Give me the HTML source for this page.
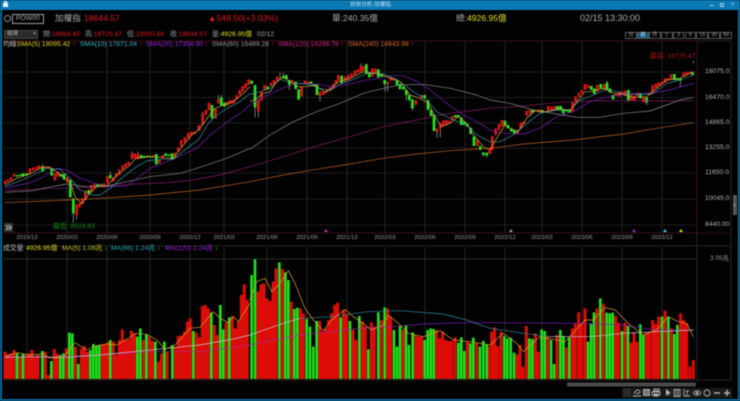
<!DOCTYPE html>
<html><head><meta charset="utf-8"><style>
html,body{margin:0;padding:0;background:#000}
#p{position:relative;width:740px;height:401px;overflow:hidden;background:#020203;font-family:"Liberation Sans","Noto Sans CJK TC",sans-serif;filter:blur(.4px)}
#p div{position:absolute;white-space:nowrap}
.t{line-height:10px;height:10px}
.a{font-size:8.6px;color:#bbb}
.c{font-size:6.8px}
.d{font-size:5.9px;color:#999;top:233px;transform:translateX(-50%)}
.y{font-size:6.8px;color:#b0b0b0;left:705px}
.r{color:#e0161c}
.ye{color:#e0e020}
.bt{top:32px;width:11.9px;height:7px;box-sizing:border-box;border:1px solid #555;font-size:5px;line-height:5px;text-align:center;color:#aaa}
svg{position:absolute;left:0;top:0}
</style></head><body><div id="p">
<div style="left:0;top:0;width:740px;height:10px;background:#0b79b4"></div>
<div style="left:0;top:10px;width:2px;height:391px;background:#0b6a9e"></div>
<div style="left:738px;top:10px;width:2px;height:391px;background:#0b6a9e"></div>
<div style="left:0;top:399px;width:740px;height:2px;background:#0b6a9e"></div>
<div class="t" style="left:350px;top:0;font-size:5.6px;color:#bfe0f0">技術分析-加權指</div>
<div style="left:3px;top:3px;width:5px;height:4px;background:#e8f4fa"></div>
<div style="left:4px;top:1px;width:3px;height:2px;border:1px solid #e8f4fa;border-bottom:0;box-sizing:border-box"></div>
<div style="left:710px;top:5px;width:4px;height:1px;background:#9cd0ea"></div>
<div style="left:720px;top:3px;width:4px;height:4px;border:1px solid #9cd0ea;box-sizing:border-box"></div>
<div style="left:731px;top:1px;font-size:6px;line-height:8px;color:#bfe0f0">×</div>

<div style="left:4px;top:15px;width:7px;height:7px;border:1px solid #888;border-radius:50%;box-sizing:border-box"></div>
<div class="t" style="left:12px;top:14px;width:32px;height:10px;border:1px solid #999;box-sizing:border-box;font-size:6.8px;line-height:8px;color:#aaa;padding-left:3px">POW00</div>
<div class="t a" style="left:55px;top:13px;color:#aaa">加權指</div>
<div class="t a r" style="left:84px;top:13px">18644.57</div>
<div class="t a r" style="left:208px;top:13px">▲548.50(+3.03%)</div>
<div class="t a" style="left:332px;top:13px;color:#aaa">單:240.35億</div>
<div class="t a" style="left:456px;top:13px;color:#aaa">總:<span class="ye">4926.95億</span></div>
<div class="t a" style="left:580px;top:13px;color:#aaa;font-size:9px">02/15 13:30:00</div>

<div class="t" style="left:4px;top:30px;width:34px;height:9px;background:#2b2b2b;border:1px solid #444;box-sizing:border-box;font-size:5.5px;line-height:7px;color:#aaa;padding-left:2px">選擇<span style="position:absolute;left:28px;color:#888">▾</span></div>
<div class="t c" style="left:43px;top:30px;color:#999">開:<span class="r">18664.45</span></div>
<div class="t c" style="left:85px;top:30px;color:#999">高:<span class="r">18725.47</span></div>
<div class="t c" style="left:127px;top:30px;color:#999">低:<span class="r">18550.86</span></div>
<div class="t c" style="left:170px;top:30px;color:#999">收:<span class="r">18644.57</span></div>
<div class="t c" style="left:212px;top:30px;color:#999">量:<span class="ye">4926.95億</span></div>
<div class="t c" style="left:257px;top:30px;color:#aaa">02/12</div>

<div class="bt" style="left:625px">日</div><div class="bt" style="left:636.9px;background:#0f5f8c;color:#cde">週</div><div class="bt" style="left:648.8px">月</div><div class="bt" style="left:660.7px">1</div><div class="bt" style="left:672.6px">3</div><div class="bt" style="left:684.5px">5</div><div class="bt" style="left:696.4px">15</div><div class="bt" style="left:708.3px">30</div><div class="bt" style="left:720.2px">60</div>

<svg width="740" height="401" viewBox="0 0 740 401">
<path d="M27 41V233M67 41V233M107 41V233M150 41V233M190 41V233M224 41V233M267 41V233M307 41V233M347 41V233M385 41V233M425 41V233M465 41V233M505 41V233M542 41V233M582 41V233M622 41V233M662 41V233M27 247V379M67 247V379M107 247V379M150 247V379M190 247V379M224 247V379M267 247V379M307 247V379M347 247V379M385 247V379M425 247V379M465 247V379M505 247V379M542 247V379M582 247V379M622 247V379M662 247V379" stroke="#2b2b2b" stroke-width=".8" fill="none"/>
<path d="M3 72H697M3 97.5H697M3 123H697M3 148H697M3 173H697M3 199H697M3 225H697" stroke="#262626" stroke-width=".8" fill="none"/>
<path d="M3 259H697" stroke="#3a3a3a" stroke-width=".8"/>
<path d="M3 41H697V233H3" stroke="#3a1016" stroke-width="1" fill="none"/>
<path d="M697 41H731V246M3 246H731M697 233V380M3 380H731V246" stroke="#2e2e2e" stroke-width=".8" fill="none"/>
<path d="M697 233H731" stroke="#3a1016" stroke-width=".8"/>

<g transform="translate(0,60) scale(.33333)" fill="none">
<path stroke="#8a8a8a" stroke-width="2.5" d="M220 415V488M230 465V478M128 312V335M414 275V298M396 275V298M192 342V360M331 335V355M655 105V130M664 105V137M608 155V195"/>
<path stroke="#d81416" stroke-width="8" d="M15 362V372M24 358V366M33 352V362M43 342V350M90 325V342M100 322V332M110 320V328M118 316V325M137 320V325M146 320V325M165 340V362M174 335V350M202 352V368M230 432V465M239 430V442M247 415V432M256 392V420M274 375V398M284 372V385M312 370V382M322 348V370M340 352V365M349 340V352M358 328V345M368 316V330M377 310V322M386 305V315M396 280V298M405 280V295M414 282V298M460 285V292M478 298V310M488 285V295M525 278V292M535 262V275M544 240V260M555 232V248M565 218V235M575 215V225M585 215V222M597 195V213M608 160V195M618 150V165M627 128V152M646 145V175M655 118V130M682 125V137M691 120V132M701 118V130M710 105V118M719 90V105M728 78V95M737 70V85M746 58V75"/>
<path stroke="#22e61e" stroke-width="8" d="M52 345V350M62 343V348M70 340V348M80 340V346M128 320V335M155 326V347M183 342V350M192 342V358M211 360V412M220 415V460M266 390V402M293 372V380M303 372V380M331 345V355M423 285V295M432 288V294M442 287V292M451 288V292M469 282V313M497 280V288M506 283V288M516 280V298M636 135V175M664 112V137M673 128V140"/>
<g stroke-width="2" stroke-linejoin="round">
<polyline stroke="#8a1c70" points="15,392 100,388 180,385 320,378 400,372 500,368 580,360 660,345 750,320"/>
<polyline stroke="#c0601f" points="15,428 200,420 300,415 450,405 600,390 750,365"/>
<polyline stroke="#8a8a8a" points="15,397 100,392 130,385 200,372 260,380 320,378 380,365 450,350 540,340 600,322 680,295 750,265"/>
<polyline stroke="#7a20b8" points="15,385 60,375 100,365 140,345 170,325 200,330 240,355 285,370 320,380 380,378 410,355 450,325 500,305 540,288 590,265 630,225 670,195 720,160 750,135"/>
<polyline stroke="#3a9aa8" points="15,380 60,362 100,345 140,325 180,328 215,360 240,390 275,405 300,405 330,385 370,350 410,320 440,303 480,298 520,298 560,265 595,240 625,190 650,165 690,140 720,125 750,100"/>
<polyline stroke="#d8a838" points="15,375 50,355 90,342 130,320 150,322 175,340 210,365 225,410 245,432 265,405 290,380 320,378 350,345 385,320 410,293 440,290 480,292 520,295 545,262 575,225 600,205 625,170 645,145 670,135 700,125 730,100 750,80"/>
</g></g>

<g transform="translate(250,60) scale(.33333)" fill="none">
<path stroke="#8a8a8a" stroke-width="2.5" d="M15 142V172M25 155V172M100 38V55M90 38V55M146 118V122M118 75V90M210 108V125M405 72V95M413 72V95M561 217V232M571 205V232M488 145V152M710 287V292M700 285V290M333 10V35M349 10V42M469 105V122M478 120V125"/>
<path stroke="#d81416" stroke-width="8" d="M25 120V155M34 95V122M44 75V90M63 68V78M72 60V72M82 50V62M127 60V68M155 80V110M165 62V72M174 65V72M210 95V108M220 95V105M230 88V98M240 82V92M250 72V85M258 60V72M265 45V62M285 50V65M295 45V60M305 40V52M315 32V45M324 28V38M333 18V35M340 18V32M367 25V50M376 25V38M413 65V72M422 52V62M431 55V62M497 120V135M515 105V115M561 205V217M571 190V205M580 182V198M589 180V195M598 182V190M607 168V180M682 240V258M719 272V282"/>
<path stroke="#22e61e" stroke-width="8" d="M5 62V72M15 75V142M53 80V88M100 48V55M109 45V58M118 60V75M137 65V87M146 88V118M183 64V72M192 72V78M201 72V105M275 47V70M349 13V42M358 38V52M385 28V52M395 42V50M404 60V72M441 62V75M450 72V88M460 80V88M469 90V105M478 105V120M487 118V145M524 105V115M534 120V150M543 150V168M552 163V213M616 165V172M625 165V172M634 172V195M643 185V195M652 192V200M662 203V222M672 230V258M691 258V270M700 277V285M710 278V287"/>
<g stroke-width="2" stroke-linejoin="round">
<polyline stroke="#8a1c62" points="0,320 100,290 200,258 300,230 400,200 500,180 600,160 680,150 720,145"/>
<polyline stroke="#c0601f" points="0,365 100,345 200,328 300,312 400,295 500,282 600,272 680,267 720,265"/>
<polyline stroke="#8a8a8a" points="0,268 60,225 130,185 200,155 270,130 340,100 400,85 450,75 520,73 600,85 680,105 720,120"/>
<polyline stroke="#7a20b8" points="0,135 30,115 70,97 110,80 150,70 200,73 250,80 300,72 340,62 385,55 420,47 460,47 500,65 540,90 590,130 640,165 690,190 720,210"/>
<polyline stroke="#3a9aa8" points="0,103 30,95 60,85 90,58 130,70 170,72 210,85 240,92 270,72 310,58 350,40 400,42 440,58 490,95 530,120 560,155 610,180 650,195 680,225 720,245"/>
<polyline stroke="#d8a838" points="0,125 20,115 40,100 60,95 80,65 100,50 120,65 145,80 170,80 195,75 225,97 245,85 265,65 300,55 340,35 380,40 410,50 450,65 480,105 510,115 535,130 555,170 575,200 600,190 625,170 650,190 670,225 700,260 720,270"/>
</g></g>

<g transform="translate(490,60) scale(.33333)" fill="none">
<path stroke="#8a8a8a" stroke-width="2.5" d="M571 62V80M220 148V168M415 118V126M470 128V135M351 62V90M120 160V168"/>
<path stroke="#d81416" stroke-width="8" d="M0 262V280M7 228V270M17 205V225M27 192V210M36 180V200M82 210V222M92 188V205M101 185V192M110 152V168M120 150V160M138 150V155M147 148V158M175 138V155M185 140V150M195 138V148M248 125V155M257 108V125M267 98V110M276 90V100M285 72V90M295 75V85M322 75V95M342 72V88M378 100V108M388 95V110M396 95V105M406 92V108M424 105V122M433 108V122M442 98V108M461 112V127M479 98V105M488 75V100M498 70V85M507 68V78M516 65V72M525 55V68M534 55V62M543 42V58M581 38V50M590 35V45M600 35V42"/>
<path stroke="#22e61e" stroke-width="8" d="M45 182V197M54 195V205M64 205V215M73 210V220M128 150V158M156 150V158M203 138V150M212 138V152M220 148V160M230 148V155M239 148V157M304 78V90M313 85V102M332 72V85M351 68V90M360 85V98M369 105V118M415 90V120M451 100V115M470 112V128M553 42V60M562 55V60M571 55V62M608 38V45"/>
<path stroke="#2a8a3a" stroke-width="4" d="M610 3V9"/>
<g stroke-width="2" stroke-linejoin="round">
<polyline stroke="#8a1c62" points="0,145 100,138 200,128 300,123 400,122 500,123 610,122"/>
<polyline stroke="#c0601f" points="0,265 100,252 250,240 400,222 500,205 610,188"/>
<polyline stroke="#8a8a8a" points="0,120 60,130 130,150 200,162 260,172 330,172 400,160 480,153 530,135 570,120 610,112"/>
<polyline stroke="#7a20b8" points="0,210 40,220 100,222 150,205 200,170 250,155 300,125 350,112 420,100 480,100 540,90 610,70"/>
<polyline stroke="#3a9aa8" points="0,245 30,245 70,225 110,190 150,160 200,150 240,150 270,120 310,105 350,88 400,100 450,105 490,100 530,70 570,60 610,45"/>
<polyline stroke="#d8a838" points="0,270 20,235 45,195 65,207 85,215 110,175 135,152 170,155 210,145 240,152 260,125 285,95 305,95 340,85 370,100 400,103 430,112 470,110 500,85 530,60 570,55 610,35"/>
</g></g>

<path d="M326 229l2 3h-4z" fill="#d030a0"/><path d="M511 229l2 3h-4z" fill="#999"/><path d="M634 229l2 3h-4z" fill="#a020d0"/><path d="M665 229l2 3h-4z" fill="#30d8e0"/><path d="M681 229l2 3h-4z" fill="#e0e020"/>

<g transform="translate(0,240) scale(.33333)" fill="none">
<path stroke="#dc0c08" stroke-width="9" d="M15 417V335M24 417V342M33 417V340M42 417V330M60 417V350M78 417V345M87 417V340M96 417V330M105 417V350M114 417V345M136 417V335M145 417V405M163 417V327M172 417V342M199 417V325M226 417V320M244 417V325M253 417V318M262 417V335M307 417V315M316 417V312M325 417V305M340 417V305M349 417V345M358 417V300M367 417V268M376 417V300M385 417V298M394 417V272M403 417V280M430 417V300M448 417V290M457 417V303M475 417V365M484 417V340M502 417V335M526 417V320M535 417V288M544 417V287M553 417V275M562 417V245M571 417V235M589 417V277M598 417V292M607 417V198M616 417V195M625 417V205M643 417V255M652 417V285M679 417V248M697 417V228M706 417V265M715 417V245M724 417V165M733 417V133M742 417V180"/>
<path stroke="#1fe01a" stroke-width="8" d="M51 417V340M69 417V342M127 417V333M154 417V363M181 417V345M190 417V340M208 417V278M217 417V280M235 417V372M271 417V330M280 417V312M289 417V318M298 417V315M331 417V300M412 417V290M421 417V265M439 417V283M466 417V305M493 417V305M517 417V315M580 417V273M634 417V217M661 417V195M670 417V268M688 417V232"/>
<g stroke-width="2" stroke-linejoin="round">
<polyline stroke="#a82a9a" points="15,350 150,352 300,345 450,335 600,335 750,315"/>
<polyline stroke="#c8c8d0" points="15,352 100,350 200,352 300,345 400,335 500,325 600,315 700,297 750,285"/>
<polyline stroke="#e0a030" points="15,350 50,338 90,345 130,342 150,355 190,352 225,308 260,330 285,318 320,312 350,315 385,295 405,280 440,283 470,300 495,328 525,315 570,265 600,262 640,215 660,235 685,248 700,230 715,245 750,190"/>
</g></g>

<g transform="translate(250,240) scale(.33333)" fill="none">
<path stroke="#dc0c08" stroke-width="9" d="M24 417V155M33 417V133M42 417V130M51 417V175M60 417V183M69 417V125M78 417V85M97 417V87M124 417V185M151 417V205M160 417V220M209 417V243M218 417V275M227 417V265M236 417V240M245 417V220M254 417V195M263 417V188M281 417V210M290 417V222M309 417V270M318 417V300M337 417V245M346 417V260M364 417V247M373 417V260M394 417V240M413 417V205M422 417V230M459 417V270M497 417V285M506 417V290M515 417V290M560 417V270M569 417V295M578 417V275M587 417V300M596 417V303M605 417V303M615 417V292M652 417V305M680 417V310M716 417V320"/>
<path stroke="#1fe01a" stroke-width="8" d="M5 417V105M15 417V58M88 417V67M106 417V97M115 417V120M133 417V207M142 417V203M170 417V237M180 417V260M190 417V320M200 417V243M272 417V232M300 417V243M328 417V228M355 417V328M385 417V217M404 417V202M432 417V270M441 417V320M450 417V258M468 417V255M477 417V315M488 417V277M524 417V300M533 417V270M542 417V265M551 417V267M625 417V308M634 417V292M643 417V333M661 417V310M670 417V293M690 417V320M700 417V303M710 417V313"/>
<g stroke-width="2" stroke-linejoin="round">
<polyline stroke="#a82a9a" points="0,315 150,285 300,268 430,260"/>
<polyline stroke="#7a20b8" points="430,260 520,252 650,248 720,248"/>
<polyline stroke="#c8c8d0" points="0,285 100,250 150,235"/>
<polyline stroke="#2f8aa0" points="150,235 250,230 350,215 450,212 580,222 650,240 720,265"/>
<polyline stroke="#e0a030" points="0,180 20,125 45,115 65,155 90,130 115,92 135,130 165,205 190,240 220,272 245,240 285,208 310,230 340,250 365,270 400,255 415,225 445,250 475,280 520,290 570,272 610,300 660,305 720,315"/>
</g></g>

<g transform="translate(490,240) scale(.33333)" fill="none">
<path stroke="#dc0c08" stroke-width="9" d="M5 417V275M14 417V262M23 417V318M33 417V275M81 417V343M90 417V315M99 417V380M109 417V258M136 417V280M145 417V335M173 417V287M201 417V285M229 417V322M247 417V265M256 417V250M266 417V217M275 417V250M285 417V205M321 417V205M340 417V192M377 417V228M386 417V248M405 417V248M423 417V308M432 417V277M441 417V305M469 417V278M478 417V277M488 417V240M497 417V252M506 417V230M525 417V212M544 417V265M572 417V220M581 417V240M590 417V250M600 417V380M610 417V360"/>
<path stroke="#1fe01a" stroke-width="8" d="M43 417V288M52 417V295M62 417V293M72 417V338M118 417V295M127 417V297M155 417V268M164 417V273M183 417V300M192 417V372M211 417V270M220 417V288M238 417V293M294 417V305M303 417V250M312 417V217M331 417V175M350 417V218M359 417V220M368 417V218M396 417V273M414 417V258M451 417V253M460 417V285M516 417V230M535 417V230M553 417V282M562 417V255"/>
<g stroke-width="2" stroke-linejoin="round">
<polyline stroke="#7a20b8" points="0,248 250,250 400,255 480,268 610,272"/>
<polyline stroke="#2f8aa0" points="0,265 100,280 180,290"/>
<polyline stroke="#c8c8d0" points="180,290 300,290 400,280 500,275 610,270"/>
<polyline stroke="#e0a030" points="0,315 40,280 80,310 100,335 150,290 225,305 285,240 310,240 345,203 375,210 420,255 460,285 500,270 535,230 565,245 590,250 610,290"/>
</g></g>

<rect x="567" y="382.5" width="129" height="4" rx="1" fill="#4a4a4a"/>
<rect x="733" y="195" width="4" height="20" fill="#555"/>
<path d="M735 204l-1 1 1 1" stroke="#ccc" stroke-width=".6" fill="none"/>
<rect x="4" y="223" width="9" height="9" fill="#333"/>
<path d="M6 225l2.500 2.500-2.500 2.500M9 225l2.500 2.500-2.500 2.500" stroke="#ccc" stroke-width=".9" fill="none"/>

<rect x="622" y="388" width="110" height="10" fill="#1a1a1a"/>
<g fill="none" stroke="#b0b0b0" stroke-width=".9">
<rect x="624" y="389" width="6" height="7" fill="#2a2a2a" stroke="#333"/>
<path d="M633 396h8M634 394c2-5 5-5 6-2-1 2-3 2-4 1"/>
<rect x="643.500" y="389.500" width="6" height="6" fill="#777"/>
<path d="M653 391h6v-2h-5v2M652 392h8v3h-8zM654 394h4v2h-4z"/>
<path d="M666 389v7l2-2 2 2-1-3h2z" fill="#bbb" stroke="none"/>
<rect x="674" y="389.500" width="6" height="7"/><path d="M676 389.500v7M678 389.500v7"/>
<path d="M684 389v7h6M686 391h3M687 391v4"/>
<ellipse cx="697" cy="393" rx="3.500" ry="2.200"/><circle cx="697" cy="393" r=".9" fill="#ccc"/>
<circle cx="707" cy="393" r="3"/>
<path d="M714 393h6" stroke-width="1.500"/>
<path d="M724 393h6M727 390v6" stroke-width="1.500"/>
</g>
</svg>

<div class="t c" style="left:3px;top:40px;color:#bbb">均線:</div>
<div class="t c" style="left:17px;top:40px;color:#e0d820">SMA(5) 18095.42 <span class="r">↑</span></div>
<div class="t c" style="left:80px;top:40px;color:#22c0c8">SMA(10) 17871.04 <span class="r">↑</span></div>
<div class="t c" style="left:146px;top:40px;color:#a020e0">SMA(20) 17354.90 <span class="r">↑</span></div>
<div class="t c" style="left:212px;top:40px;color:#999">SMA(60) 16489.28 <span class="r">↑</span></div>
<div class="t c" style="left:278px;top:40px;color:#d8208a">SMA(120) 16266.76 <span class="r">↑</span></div>
<div class="t c" style="left:348px;top:40px;color:#e0661c">SMA(240) 14843.98 <span class="r">↑</span></div>

<div class="t c" style="left:650px;top:52px;color:#b01218">最高: 18725.47</div>
<div class="t c" style="left:53px;top:222px;color:#129014">最低: 8523.63</div>

<div class="t y" style="top:67px">18075.0</div>
<div class="t y" style="top:92.500px">16470.0</div>
<div class="t y" style="top:118px">14865.0</div>
<div class="t y" style="top:143px">13255.0</div>
<div class="t y" style="top:168px">11650.0</div>
<div class="t y" style="top:194px">10045.0</div>
<div class="t y" style="top:220px">8440.00</div>
<div class="t" style="left:710px;top:254px;font-size:6.400px;color:#999">3.05兆</div>

<div class="t d" style="left:27px">2019/12</div><div class="t d" style="left:67px">2020/03</div><div class="t d" style="left:107px">2020/06</div><div class="t d" style="left:150px">2020/09</div><div class="t d" style="left:190px">2020/12</div><div class="t d" style="left:224px">2021/03</div><div class="t d" style="left:267px">2021/06</div><div class="t d" style="left:307px">2021/09</div><div class="t d" style="left:347px">2021/12</div><div class="t d" style="left:385px">2022/03</div><div class="t d" style="left:425px">2022/06</div><div class="t d" style="left:465px">2022/09</div><div class="t d" style="left:505px">2022/12</div><div class="t d" style="left:542px">2023/03</div><div class="t d" style="left:582px">2023/06</div><div class="t d" style="left:622px">2023/09</div><div class="t d" style="left:662px">2023/12</div>

<div class="t c" style="left:3px;top:244px;color:#bbb">成交量</div>
<div class="t c ye" style="left:26px;top:244px">4926.95億</div>
<div class="t c" style="left:62px;top:244px;color:#c8c820">MA(5) 1.08兆 <span style="color:#20c020">↓</span></div>
<div class="t c" style="left:111px;top:244px;color:#22a8b0">MA(66) 1.24兆 <span style="color:#20c020">↓</span></div>
<div class="t c" style="left:165px;top:244px;color:#9a20d8">MA(120) 1.24兆 <span style="color:#20c020">↓</span></div>
</div></body></html>
